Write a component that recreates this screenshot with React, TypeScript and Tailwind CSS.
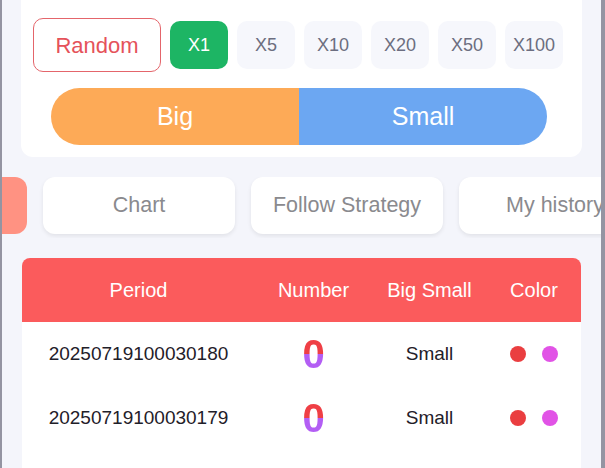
const multipliers = ["X1", "X5", "X10", "X20", "X50", "X100"];

const tabs = ["", "Chart", "Follow Strategy", "My history"];

interface Row {
  period: string;
  num: string;
  size: string;
  grad: string;
  dots: string[];
}

const rows: Row[] = [
  {
    period: "20250719100030180",
    num: "0",
    size: "Small",
    grad: "bg-[linear-gradient(to_bottom,#ef3f45_50%,#b35ef4_50%)]",
    dots: ["bg-[#ea3e40]", "bg-[#e153e6]"],
  },
  {
    period: "20250719100030179",
    num: "0",
    size: "Small",
    grad: "bg-[linear-gradient(to_bottom,#ef3f45_50%,#b35ef4_50%)]",
    dots: ["bg-[#ea3e40]", "bg-[#e153e6]"],
  },
  {
    period: "20250719100030178",
    num: "5",
    size: "Big",
    grad: "bg-[linear-gradient(to_bottom,#1fb46a_50%,#b35ef4_50%)]",
    dots: ["bg-[#1fb46a]", "bg-[#e153e6]"],
  },
];

export default function App() {
  return (
    <div className="h-screen overflow-hidden bg-[#f4f5fb] border-l-2 border-r-4 border-[#9494a2] font-['Liberation_Sans',Arial,sans-serif]">
      {/* bet panel */}
      <div className="px-[19px]">
        <div className="bg-white rounded-b-[12px] pt-[18px] pb-[12px]">
          <div className="flex items-center gap-[9px] pl-[12px]">
            <button
              type="button"
              className="w-[128px] h-[54px] rounded-[10px] border border-[#e4656b] text-[#e5525a] text-[22px]"
            >
              Random
            </button>
            {multipliers.map((m, i) => (
              <button
                key={m}
                type="button"
                className={`w-[58px] h-[48px] rounded-[10px] text-[18px] ${
                  i === 0
                    ? "bg-[#1db564] text-white"
                    : "bg-[#f6f7fc] text-[#6c6e80]"
                }`}
              >
                {m}
              </button>
            ))}
          </div>
          <div className="mt-[16px] ml-[30px] w-[496px] h-[57px] flex rounded-full overflow-hidden text-white text-[25px]">
            <div className="flex-1 bg-[#fdaa57] flex items-center justify-center">Big</div>
            <div className="flex-1 bg-[#6ca7f2] flex items-center justify-center">Small</div>
          </div>
        </div>
      </div>

      {/* tabs */}
      <div className="overflow-hidden mt-[20px] pb-[4px]">
        <div className="flex gap-4 -ml-[167px]">
          {tabs.map((t, i) => (
            <div
              key={i}
              className={`shrink-0 w-[192px] h-[57px] rounded-[12px] flex items-center justify-center text-[21.5px] whitespace-nowrap ${
                i === 0
                  ? "bg-[#ff9282]"
                  : "bg-white text-[#8a8a8e] shadow-[0_2px_4px_rgba(0,0,0,0.08)]"
              }`}
            >
              {t}
            </div>
          ))}
        </div>
      </div>

      {/* history table */}
      <div className="px-[19px] mt-[20px]">
        <div className="mx-px">
          <div className="grid grid-cols-[233px_117px_115px_1fr] h-[64px] items-center bg-[#fb5b5c] rounded-t-[8px] text-white text-[20px] text-center">
            <div>Period</div>
            <div>Number</div>
            <div>Big Small</div>
            <div>Color</div>
          </div>
          <div className="bg-white">
            {rows.map((r) => (
              <div
                key={r.period}
                className="grid grid-cols-[233px_117px_115px_1fr] h-[64px] items-center text-center text-[19px] text-[#1f2029]"
              >
                <div>{r.period}</div>
                <div className="flex justify-center">
                  <span
                    className={`${r.grad} bg-clip-text text-transparent text-[40px] font-bold leading-none`}
                  >
                    {r.num}
                  </span>
                </div>
                <div>{r.size}</div>
                <div className="flex justify-center gap-4">
                  {r.dots.map((d, j) => (
                    <span key={j} className={`w-4 h-4 rounded-full ${d}`} />
                  ))}
                </div>
              </div>
            ))}
          </div>
        </div>
      </div>
    </div>
  );
}
